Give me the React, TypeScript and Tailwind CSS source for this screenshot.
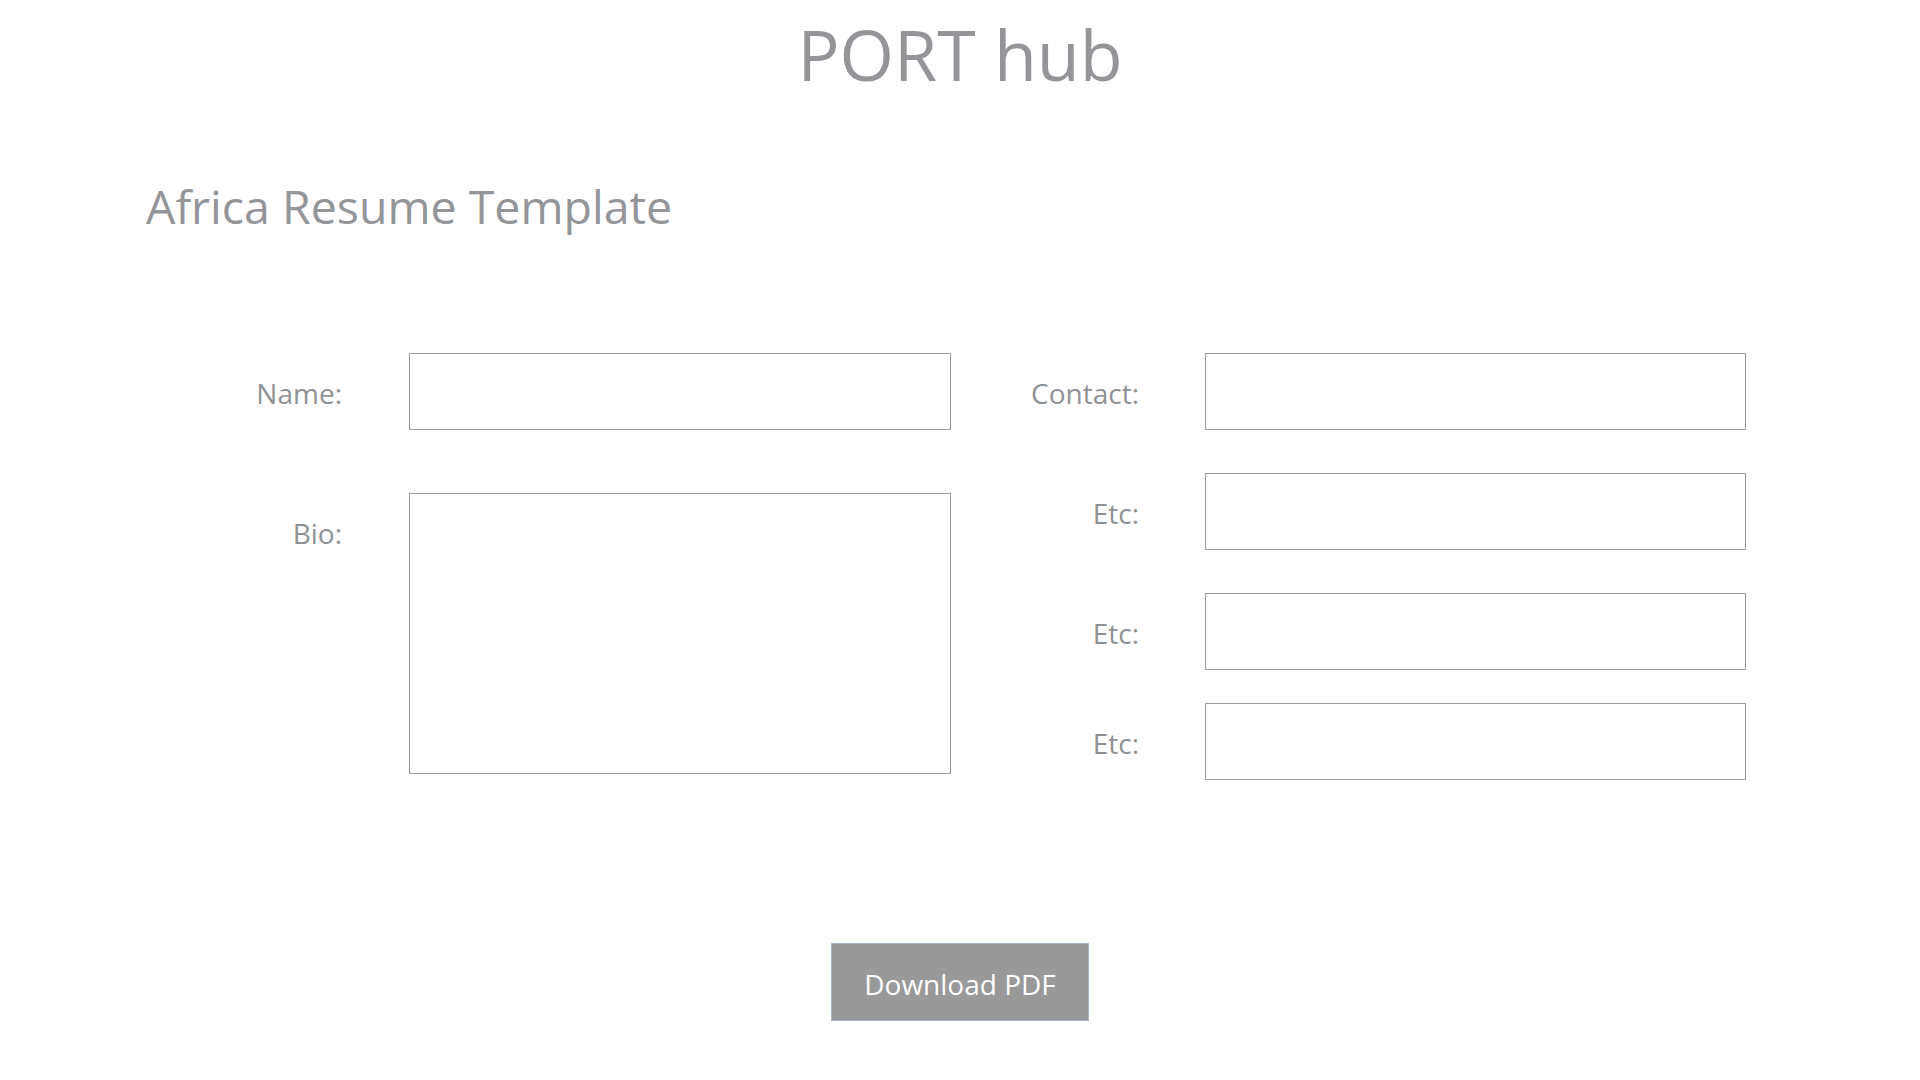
import React from "react";

const font = { fontFamily: '"Open Sans", "Noto Sans", sans-serif' };

function Label({ children, gapClass }: { children: React.ReactNode; gapClass: string }) {
  return (
    <div className={`w-[168px] h-[77px] pt-[3px] flex items-center justify-end text-[28px] text-[#8f9295] shrink-0 ${gapClass}`}>
      {children}
    </div>
  );
}

export default function App() {
  return (
    <div className="min-h-[1080px] w-full bg-white font-['Open_Sans',_'Noto_Sans',_sans-serif]">
      <h1 className="pt-[19px] text-center text-[70px] leading-[70px] font-normal text-[#939598]">
        PORT hub
      </h1>
      <h2 className="mt-[94px] pl-[146px] text-[46.5px] leading-[47px] font-normal text-[#939598]">
        Africa Resume Template
      </h2>

      <form className="mt-[123px] pl-[174px] flex flex-row" onSubmit={(e) => e.preventDefault()}>
        <div className="flex flex-col gap-[63px] w-[777px] shrink-0">
          <div className="flex flex-row">
            <Label gapClass="mr-[67px]">Name:</Label>
            <input type="text" className="w-[542px] h-[77px] border border-[#9c9c9c] bg-white outline-none" />
          </div>
          <div className="flex flex-row">
            <Label gapClass="mr-[67px]">Bio:</Label>
            <textarea className="w-[542px] h-[281px] border border-[#9c9c9c] bg-white outline-none resize-none" />
          </div>
        </div>

        <div className="ml-[20px] flex flex-col">
          <div className="flex flex-row">
            <Label gapClass="mr-[66px]">Contact:</Label>
            <input type="text" className="w-[541px] h-[77px] border border-[#9c9c9c] bg-white outline-none" />
          </div>
          <div className="flex flex-row mt-[43px]">
            <Label gapClass="mr-[66px]">Etc:</Label>
            <input type="text" className="w-[541px] h-[77px] border border-[#9c9c9c] bg-white outline-none" />
          </div>
          <div className="flex flex-row mt-[43px]">
            <Label gapClass="mr-[66px]">Etc:</Label>
            <input type="text" className="w-[541px] h-[77px] border border-[#9c9c9c] bg-white outline-none" />
          </div>
          <div className="flex flex-row mt-[33px]">
            <Label gapClass="mr-[66px]">Etc:</Label>
            <input type="text" className="w-[541px] h-[77px] border border-[#9c9c9c] bg-white outline-none" />
          </div>
        </div>
      </form>

      <div className="mt-[163px] flex justify-center">
        <button
          type="button"
          style={font}
          className="w-[258px] h-[78px] pt-[3px] bg-[#999999] border border-[#a8b6c4] text-white text-[28px] flex items-center justify-center"
        >
          Download PDF
        </button>
      </div>
    </div>
  );
}
